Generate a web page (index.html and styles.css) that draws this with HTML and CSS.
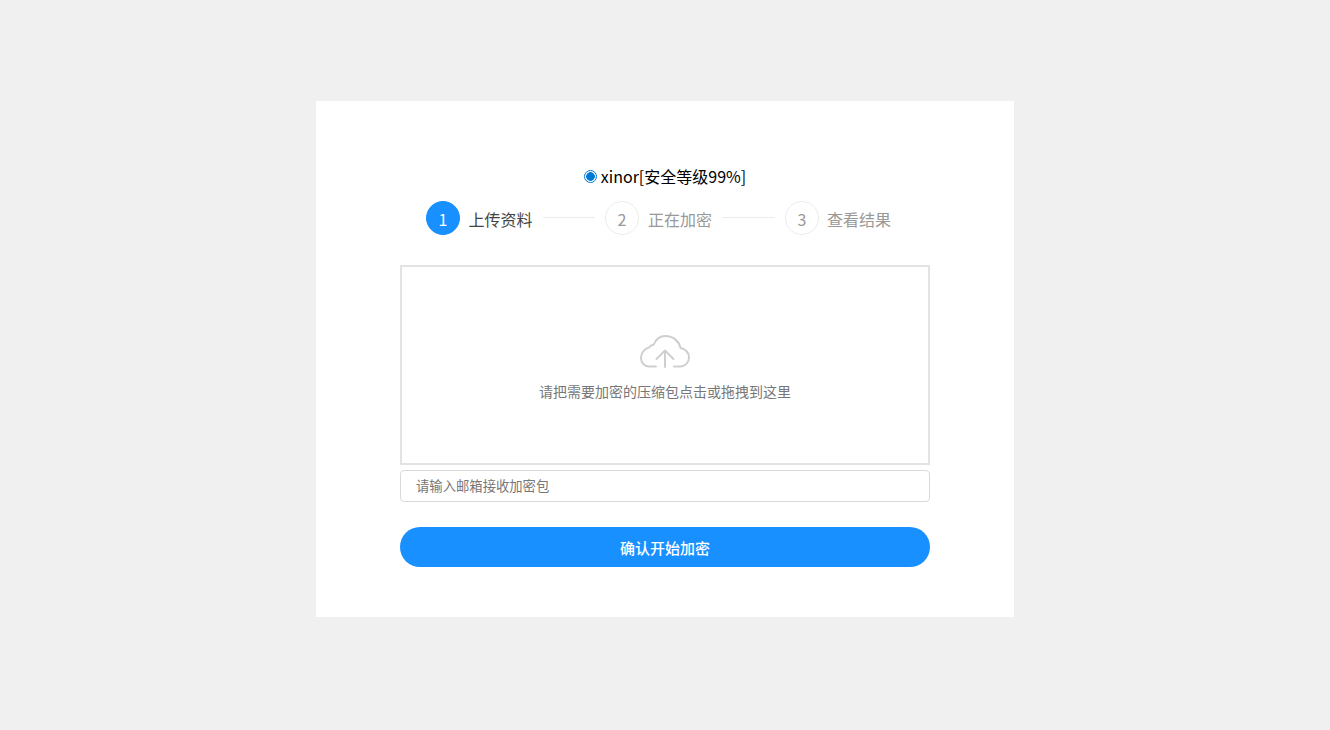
FILE: index.html
```html
<!DOCTYPE html>
<html lang="zh-CN">
<head>
<meta charset="utf-8">
<title>加密</title>
<link rel="stylesheet" href="styles.css">
</head>
<body>
<main class="card">
  <label class="choice"><input class="radio" type="radio" name="algo" checked><span>xinor[安全等级99%]</span></label>
  <ol class="steps">
    <li class="step active"><span class="num">1</span><span class="title">上传资料</span></li>
    <li class="line first-line"></li>
    <li class="step"><span class="num">2</span><span class="title">正在加密</span></li>
    <li class="line second-line"></li>
    <li class="step last"><span class="num">3</span><span class="title">查看结果</span></li>
  </ol>
  <div class="drop">
    <svg class="cloud" width="52" height="36" viewBox="0 0 52 36" fill="none" stroke="#cfcfcf" stroke-width="2" stroke-linecap="round" stroke-linejoin="round">
      <path d="M17 32.5H10.5C5.5 32.5 2 28.5 2 24C2 19 5.5 14.5 10 13.5C11 12 12.5 11 14.5 10.8C17 5 21 2 26.5 2C34 2 40 7 41.5 14C46.5 14.8 50 18.8 50 23.5C50 28.5 46 32.5 41 32.5H35"/>
      <path d="M26 33V16.5M17.5 25L26 16.5L34.5 25"/>
    </svg>
    <p class="hint">请把需要加密的压缩包点击或拖拽到这里</p>
  </div>
  <input class="email" type="text" placeholder="请输入邮箱接收加密包">
  <button class="submit" type="button">确认开始加密</button>
</main>
</body>
</html>
```
FILE: styles.css
```css
* { box-sizing: border-box; }
html, body { margin: 0; height: 100%; }
body {
  background: #f0f0f0;
  font-family: "Noto Sans CJK SC", "Noto Sans", sans-serif;
  overflow: hidden;
}
.card {
  width: 698px;
  height: 516px;
  margin: 101px auto 0;
  background: #fff;
  padding: 63px 84px 0;
  display: flex;
  flex-direction: column;
}
.choice {
  display: flex;
  justify-content: center;
  align-items: center;
  height: 24px;
  font-size: 16px;
  line-height: 24px;
  color: #000;
}
.radio {
  appearance: none;
  width: 13px;
  height: 13px;
  margin: 0 4px 0 0;
  border: 1.5px solid #0078d7;
  border-radius: 50%;
  background: radial-gradient(circle, #0078d7 0, #0078d7 4px, #fff 4.6px);
}
.steps {
  list-style: none;
  margin: 13px 0 0;
  padding: 0 0 0 26px;
  display: flex;
  align-items: flex-start;
  height: 34px;
}
.step { display: flex; align-items: center; height: 34px; }
.num {
  width: 34px;
  height: 34px;
  border-radius: 50%;
  border: 1px solid #ececec;
  display: flex;
  align-items: center;
  justify-content: center;
  font-size: 16px;
  color: #999;
  padding-top: 2px;
}
.title {
  margin-left: 9px;
  font-size: 16px;
  color: #999;
  padding-top: 1px;
}
.last .title { margin-left: 8px; }
.active .num { background: #1890ff; border-color: #1890ff; color: #fff; }
.active .title { color: #444; margin-left: 8.6px; }
.line {
  height: 1px;
  margin: 16px 10px 0;
  background: #ececec;
}
.first-line { width: 52.4px; }
.second-line { width: 53px; }
.drop {
  margin-top: 30px;
  height: 200px;
  border: 2px solid #e3e3e3;
  display: flex;
  flex-direction: column;
  align-items: center;
  padding-top: 67px;
}
.cloud { display: block; }
.hint {
  margin: 10px 0 0;
  font-size: 14px;
  line-height: 22px;
  color: #777;
}
.email {
  margin-top: 5px;
  height: 32px;
  width: 100%;
  border: 1px solid #d9d9d9;
  border-radius: 4px;
  padding: 0 15px 2px;
  font: 13.33px "Noto Sans CJK SC", sans-serif;
  outline: none;
}
.email::placeholder { color: #777; opacity: 1; }
.submit {
  margin-top: 25px;
  height: 40px;
  width: 100%;
  border: 0;
  border-radius: 20px;
  background: #1890ff;
  color: #fff;
  font: 500 15px "Noto Sans CJK SC", sans-serif;
  padding: 0;
}
```
